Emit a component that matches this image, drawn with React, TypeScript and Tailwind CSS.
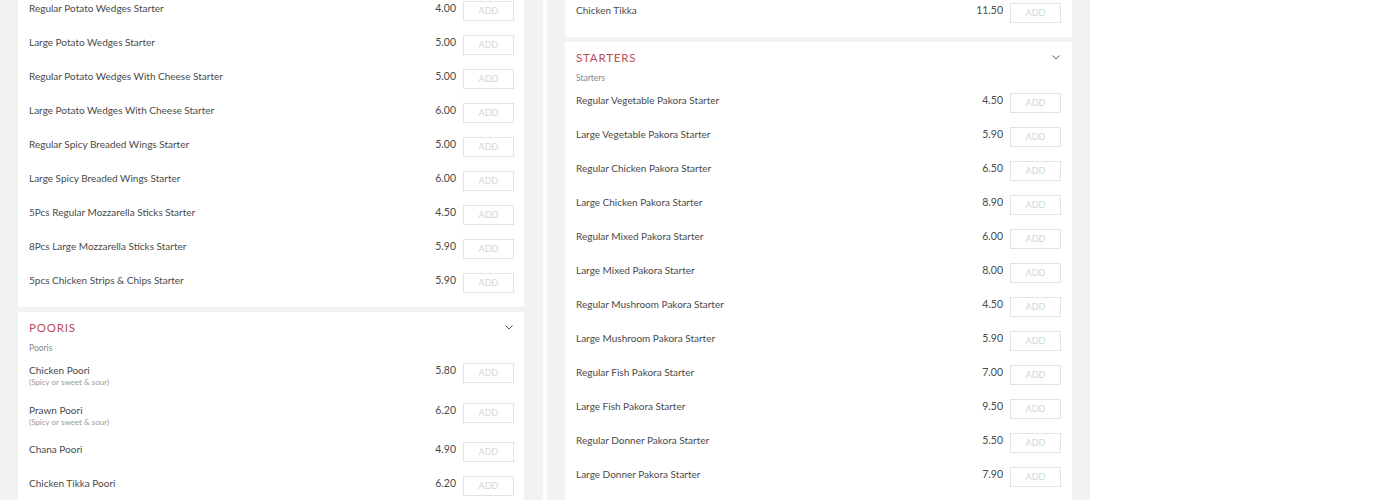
import React from "react";

type Item = { name: string; price: string; desc?: string };

const wedges: Item[] = [
  { name: "Regular Potato Wedges Starter", price: "4.00" },
  { name: "Large Potato Wedges Starter", price: "5.00" },
  { name: "Regular Potato Wedges With Cheese Starter", price: "5.00" },
  { name: "Large Potato Wedges With Cheese Starter", price: "6.00" },
  { name: "Regular Spicy Breaded Wings Starter", price: "5.00" },
  { name: "Large Spicy Breaded Wings Starter", price: "6.00" },
  { name: "5Pcs Regular Mozzarella Sticks Starter", price: "4.50" },
  { name: "8Pcs Large Mozzarella Sticks Starter", price: "5.90" },
  { name: "5pcs Chicken Strips & Chips Starter", price: "5.90" },
];

const pooris: Item[] = [
  { name: "Chicken Poori", price: "5.80", desc: "(Spicy or sweet & sour)" },
  { name: "Prawn Poori", price: "6.20", desc: "(Spicy or sweet & sour)" },
  { name: "Chana Poori", price: "4.90" },
  { name: "Chicken Tikka Poori", price: "6.20" },
];

const starters: Item[] = [
  { name: "Regular Vegetable Pakora Starter", price: "4.50" },
  { name: "Large Vegetable Pakora Starter", price: "5.90" },
  { name: "Regular Chicken Pakora Starter", price: "6.50" },
  { name: "Large Chicken Pakora Starter", price: "8.90" },
  { name: "Regular Mixed Pakora Starter", price: "6.00" },
  { name: "Large Mixed Pakora Starter", price: "8.00" },
  { name: "Regular Mushroom Pakora Starter", price: "4.50" },
  { name: "Large Mushroom Pakora Starter", price: "5.90" },
  { name: "Regular Fish Pakora Starter", price: "7.00" },
  { name: "Large Fish Pakora Starter", price: "9.50" },
  { name: "Regular Donner Pakora Starter", price: "5.50" },
  { name: "Large Donner Pakora Starter", price: "7.90" },
  { name: "Regular Kebab Pakora Starter", price: "6.50" },
];

function Row({ item }: { item: Item }) {
  return (
    <div className={`flex items-start ${item.desc ? "h-[39.5px]" : "h-[34px]"}`}>
      <div className="flex-1 pt-[1px]">
        <div className="text-[10px] leading-[12px] text-[#4a4a4a]">{item.name}</div>
        {item.desc && (
          <div className="mt-[1px] text-[8px] leading-[10px] text-[#9a9a9a]">{item.desc}</div>
        )}
      </div>
      <div className="pt-[1px] text-[10.5px] leading-[12px] text-[#4a4a4a]">{item.price}</div>
      <button className="ml-[7px] flex h-[20px] w-[51px] items-center justify-center border border-[#e2e4e4] bg-white text-[9px] text-[#cfd6d6]">
        ADD
      </button>
    </div>
  );
}

function Chevron() {
  return (
    <svg width="8" height="5" viewBox="0 0 8 5" className="mt-[5px]">
      <path d="M0.5 0.5 L4 4 L7.5 0.5" fill="none" stroke="#555" strokeWidth="1" />
    </svg>
  );
}

function Section({ title, items, right }: { title: string; items: Item[]; right: string }) {
  return (
    <div className={`bg-white pl-[11px] ${right}`}>
      <div className="flex items-start justify-between pt-[8px]">
        <div className="text-[11.5px] leading-[15px] tracking-[0.8px] text-[#b94c5a]">{title}</div>
        <div className="pr-[1px]">
          <Chevron />
        </div>
      </div>
      <div className="mt-[8px] text-[8.5px] leading-[10px] text-[#888]">
        {title.charAt(0) + title.slice(1).toLowerCase()}
      </div>
      <div className="mt-[10px]">
        {items.map((it) => (
          <Row key={it.name} item={it} />
        ))}
      </div>
    </div>
  );
}

export default function App() {
  return (
    <div
      className="flex h-[500px] w-[1400px] overflow-hidden bg-white"
      style={{ fontFamily: "Lato, 'Open Sans', sans-serif" }}
    >
      <div className="flex w-[543px] flex-col gap-[5px] bg-[#f2f2f2] pl-[18px] pr-[19px]">
        <div className="bg-white pl-[11px] pr-[10px] pt-[1px]">
          {wedges.map((it) => (
            <Row key={it.name} item={it} />
          ))}
        </div>
        <Section title="POORIS" items={pooris} right="pr-[10px]" />
      </div>
      <div className="ml-[4px] flex w-[543px] flex-col gap-[5px] bg-[#f2f2f2] pl-[18px] pr-[18px]">
        <div className="bg-white pl-[11px] pr-[11px] pt-[3px]">
          <Row item={{ name: "Chicken Tikka", price: "11.50" }} />
        </div>
        <Section title="STARTERS" items={starters} right="pr-[11px]" />
      </div>
    </div>
  );
}
